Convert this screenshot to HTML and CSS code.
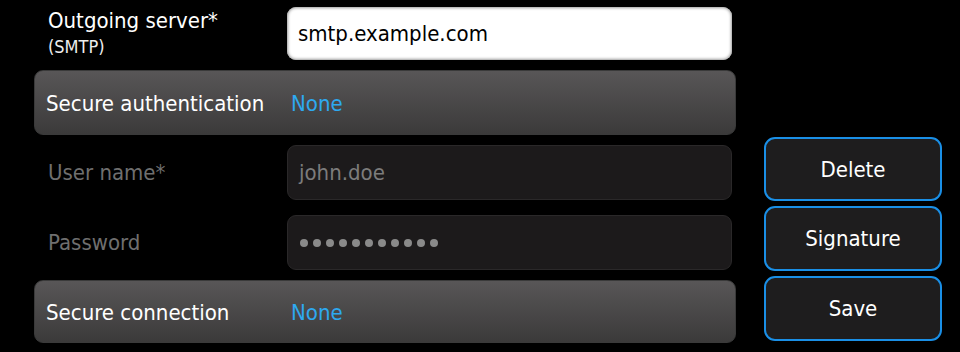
FILE: index.html
```html
<!DOCTYPE html>
<html lang="en">
<head>
  <meta charset="UTF-8">
  <meta name="viewport" content="width=device-width, initial-scale=1.0">
  <title>Mail account settings</title>
  <link rel="stylesheet" href="styles.css">
</head>
<body>
  <div class="screen">
    <div class="form">
      <div class="field-row first">
        <div class="label">
          <span class="label-main">Outgoing server*</span>
          <span class="label-sub">(SMTP)</span>
        </div>
        <div class="input light">smtp.example.com</div>
      </div>

      <div class="picker">
        <span class="picker-label">Secure authentication</span>
        <span class="picker-value">None</span>
      </div>

      <div class="field-row disabled">
        <div class="label"><span class="label-main">User name*</span></div>
        <div class="input dark">john.doe</div>
      </div>

      <div class="field-row disabled second">
        <div class="label"><span class="label-main">Password</span></div>
        <div class="input dark dots">
          <span class="dot"></span><span class="dot"></span><span class="dot"></span>
          <span class="dot"></span><span class="dot"></span><span class="dot"></span>
          <span class="dot"></span><span class="dot"></span><span class="dot"></span>
          <span class="dot"></span><span class="dot"></span>
        </div>
      </div>

      <div class="picker">
        <span class="picker-label">Secure connection</span>
        <span class="picker-value">None</span>
      </div>
    </div>

    <div class="actions">
      <button class="action-btn">Delete</button>
      <button class="action-btn">Signature</button>
      <button class="action-btn">Save</button>
    </div>
  </div>
</body>
</html>
```

FILE: styles.css
```css
body {
  margin: 0;
  padding: 0;
  background-color: #000;
  font-family: "DejaVu Sans Condensed", "DejaVu Sans", sans-serif;
  color: #fff;
}

.screen {
  width: 960px;
  height: 352px;
  display: flex;
  overflow: hidden;
}

.form {
  width: 702px;
  margin-left: 34px;
  padding-top: 7px;
  display: flex;
  flex-direction: column;
}

.field-row {
  display: flex;
  align-items: center;
  height: 55px;
  margin-top: 10px;
}

.field-row.first {
  height: 53px;
  margin-top: 0;
}

.field-row.second {
  margin-top: 15px;
}

.label {
  width: 239px;
  padding-left: 14px;
  display: flex;
  flex-direction: column;
}

.label-main {
  font-size: 22px;
  line-height: 25px;
}

.label-sub {
  font-size: 18px;
  line-height: 28px;
  color: #eee;
}

.first .label {
  margin-top: 2px;
}

.disabled .label-main {
  color: #6f6f6f;
}

.input {
  width: 445px;
  height: 100%;
  box-sizing: border-box;
  border-radius: 9px;
  display: flex;
  align-items: center;
  padding-left: 11px;
  font-size: 22px;
}

.input.light {
  background-color: #fff;
  color: #000;
  box-shadow: inset 0 0 3px 1px #9a9a9a;
}

.input.dark {
  background-color: #1c1a1b;
  border: 1px solid #2a2829;
  color: #7c7c7c;
}

.dots {
  gap: 5px;
  padding-left: 12px;
}

.dot {
  width: 8px;
  height: 8px;
  border-radius: 50%;
  background-color: #8a8a8a;
}

.picker {
  height: 65px;
  margin-top: 10px;
  box-sizing: border-box;
  border-radius: 9px;
  border: 1px solid #3a3a3a;
  background: linear-gradient(to bottom, #585657, #3b3a3a);
  display: flex;
  align-items: center;
  padding-left: 11px;
  padding-top: 2px;
  font-size: 22px;
}

.picker:last-child {
  height: 63px;
}

.picker-label {
  width: 245px;
}

.picker-value {
  color: #2ea9f0;
}

.actions {
  margin-left: 28px;
  width: 178px;
  padding-top: 137px;
  display: flex;
  flex-direction: column;
  gap: 5px;
}

.action-btn {
  height: 65px;
  box-sizing: border-box;
  border: 2px solid #1a8fe6;
  border-radius: 11px;
  background-color: #1e1d1e;
  color: #fff;
  font-family: inherit;
  font-size: 22px;
  cursor: pointer;
}

.action-btn:first-child {
  height: 64px;
}
```
